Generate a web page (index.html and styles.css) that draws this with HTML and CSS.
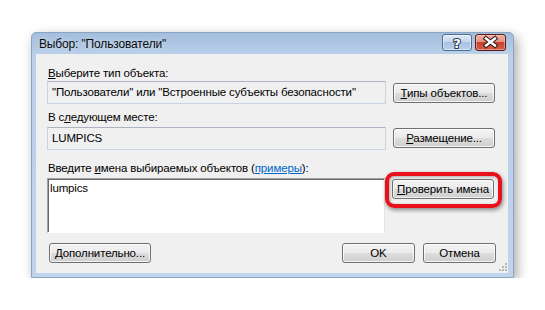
FILE: index.html
```html
<!DOCTYPE html>
<html lang="ru">
<head>
    <meta charset="UTF-8">
    <title>Выбор: "Пользователи"</title>
    <link rel="stylesheet" href="styles.css">
</head>
<body>
    <div class="dialog">
        <div class="titlebar">
            <span class="title">Выбор: "Пользователи"</span>
            <div class="caption-buttons">
                <div class="cap-btn help">
                    <svg width="28" height="15" viewBox="0 0 28 15">
                        <text x="14" y="12.5" text-anchor="middle" class="help-glyph">?</text>
                    </svg>
                </div>
                <div class="cap-btn close">
                    <svg width="29" height="15" viewBox="0 0 29 15">
                        <path d="M10 3.5 L19 10.5 M19 3.5 L10 10.5" stroke="#3b1c18" stroke-width="4.6" stroke-linecap="square" fill="none"/>
                        <path d="M10 3.5 L19 10.5 M19 3.5 L10 10.5" stroke="#fff" stroke-width="2.4" stroke-linecap="square" fill="none"/>
                    </svg>
                </div>
            </div>
        </div>

        <div class="client">
            <!-- тип объекта -->
            <div class="label first"><u>В</u>ыберите тип объекта:</div>
            <div class="row">
                <div class="field">"Пользователи" или "Встроенные субъекты безопасности"</div>
                <div class="btn btn-side top2"><u>Т</u>ипы объектов...</div>
            </div>

            <!-- размещение -->
            <div class="label second">В с<u>л</u>едующем месте:</div>
            <div class="row row-gap">
                <div class="field">LUMPICS</div>
                <div class="btn btn-side top1"><u>Р</u>азмещение...</div>
            </div>

            <!-- имена -->
            <div class="label third">Введите <u>и</u>мена выбираемых объектов (<a class="link">примеры</a>):</div>
            <div class="row row-gap">
                <div class="names">lumpics</div>
                <div class="check-wrap top1">
                    <div class="btn btn-side"><u>П</u>роверить имена</div>
                    <div class="ring"></div>
                </div>
            </div>

            <div class="footer">
                <div class="btn btn-more"><u>Д</u>ополнительно...</div>
                <div class="footer-right">
                    <div class="btn btn-ok">OK</div>
                    <div class="btn btn-ok">Отмена</div>
                </div>
            </div>

            <svg class="grip" width="9" height="9" viewBox="0 0 9 9">
                <rect x="7" y="1" width="2" height="2" fill="#b8b8b8"/>
                <rect x="4" y="4" width="2" height="2" fill="#b8b8b8"/>
                <rect x="7" y="4" width="2" height="2" fill="#b8b8b8"/>
                <rect x="1" y="7" width="2" height="2" fill="#b8b8b8"/>
                <rect x="4" y="7" width="2" height="2" fill="#b8b8b8"/>
                <rect x="7" y="7" width="2" height="2" fill="#b8b8b8"/>
            </svg>
        </div>
    </div>
</body>
</html>
```

FILE: styles.css
```css
body {
    margin: 0;
    background: #fff;
    font-family: "Liberation Sans", Arial, sans-serif;
    font-size: 11.5px;
    letter-spacing: -0.15px;
    color: #000;
}

.dialog {
    margin: 32px 0 0 31px;
    width: 483px;
    height: 246px;
    box-sizing: border-box;
    border: 1px solid #8aa4c4;
    border-radius: 5px 5px 0 0;
    background: linear-gradient(#a3bddc, #b9cfea 21px, #bfd5ee);
    box-shadow: 3px 4px 12px rgba(0,0,0,0.35);
    display: flex;
    flex-direction: column;
}

.titlebar {
    height: 21px;
    display: flex;
    justify-content: space-between;
    align-items: flex-start;
}

.title {
    padding: 4px 0 0 7px;
    line-height: 14px;
    font-size: 12px;
    color: #0b0b0b;
    text-shadow: 0 0 6px rgba(255,255,255,0.6);
}

.caption-buttons {
    display: flex;
    gap: 3px;
    margin: 1px 7px 0 0;
}

.cap-btn {
    height: 17px;
    box-sizing: border-box;
    border-radius: 3px;
    display: flex;
    align-items: center;
    justify-content: center;
}

.help {
    width: 30px;
    border: 1px solid #4f6d92;
    background: linear-gradient(#dfe9f6, #c3d5ec 50%, #a9c1e0 50%, #b9cfe9);
    box-shadow: inset 0 0 0 1px rgba(255,255,255,0.5);
}

.help-glyph {
    font-family: "DejaVu Sans", sans-serif;
    font-weight: bold;
    font-size: 13px;
    fill: #fff;
    stroke: #2d3a4c;
    stroke-width: 2px;
    paint-order: stroke;
}

.close {
    width: 31px;
    border: 1px solid #5c1a14;
    background: linear-gradient(#eeb0a3, #e08d7e 50%, #c8402f 50%, #d2604c);
    box-shadow: inset 0 0 0 1px rgba(255,220,210,0.45);
}

.client {
    flex: 1;
    margin: 0 5px 4px 4px;
    background: #f0f0f0;
    padding: 12px 13px 0 11px;
    position: relative;
}

.label {
    line-height: 14px;
    white-space: nowrap;
    padding-left: 1px;
}

.label.first {
    margin-bottom: 1px;
}

.label.second {
    margin-top: 6px;
}

.label.third {
    margin-top: 11px;
}

.row {
    display: flex;
    gap: 7px;
    align-items: flex-start;
}

.row-gap {
    margin-top: 3px;
}

.field {
    width: 339px;
    height: 23px;
    box-sizing: border-box;
    border: 1px solid #c9d4e2;
    border-top-color: #abb4c0;
    background: #f0f0f0;
    padding: 0 4px;
    line-height: 21px;
    white-space: nowrap;
    overflow: hidden;
}

.names {
    width: 338px;
    height: 55px;
    box-sizing: border-box;
    background: #fff;
    border-top: 1px solid #a0a0a0;
    border-left: 1px solid #a0a0a0;
    border-right: 1px solid #e3e3e3;
    border-bottom: 1px solid #fdfdfd;
    box-shadow: inset 1px 1px 0 #696969;
    padding: 2px 2px;
    line-height: 14px;
}

.btn {
    height: 20px;
    box-sizing: border-box;
    border: 1px solid #707070;
    border-radius: 3px;
    background: linear-gradient(#f3f3f3, #ebebeb 48%, #dddddd 52%, #cfcfcf);
    box-shadow: inset 0 0 0 1px rgba(255,255,255,0.75);
    text-align: center;
    line-height: 18px;
    white-space: nowrap;
}

.btn-side {
    width: 102px;
}

.top2 {
    margin-top: 2px;
}

.top1 {
    margin-top: 1px;
}

.check-wrap {
    position: relative;
}

.ring {
    position: absolute;
    left: -7px;
    top: -7px;
    right: -8px;
    bottom: -9px;
    border: 4px solid #e8111b;
    border-radius: 9px;
    box-shadow: 1px 2px 4px rgba(0,0,0,0.45), inset 1px 1px 3px rgba(0,0,0,0.3);
}

.link {
    color: #0066cc;
    text-decoration: underline;
}

.footer {
    display: flex;
    justify-content: space-between;
    margin-top: 10px;
}

.btn-more {
    width: 102px;
    margin-left: 2px;
}

.footer-right {
    display: flex;
    gap: 8px;
    margin-right: -1px;
}

.btn-ok {
    width: 73px;
}

.grip {
    position: absolute;
    right: 1px;
    bottom: 2px;
}
```
